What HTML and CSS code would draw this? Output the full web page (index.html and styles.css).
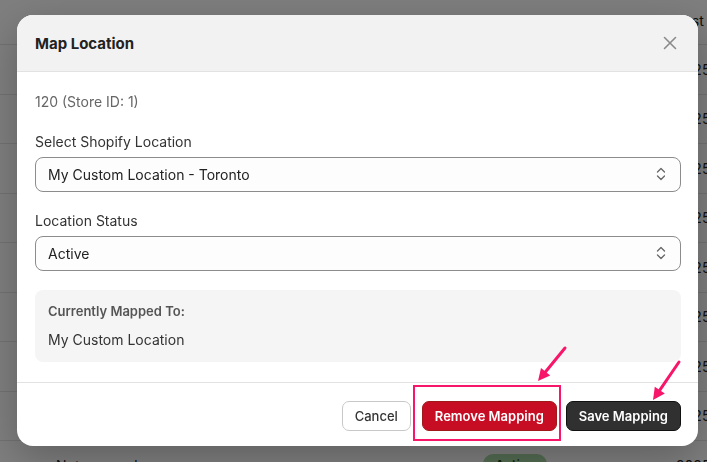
FILE: index.html
```html
<!DOCTYPE html>
<html lang="en">
<head>
    <meta charset="UTF-8">
    <meta name="viewport" content="width=device-width, initial-scale=1.0">
    <title>Store Locations</title>
    <link rel="stylesheet" href="styles.css">
</head>
<body>
    <div class="locations">
        <div class="row row-head">
            <span class="col-name"></span>
            <span class="col-status"></span>
            <span class="col-date">Last</span>
        </div>
        <div class="row"><span class="col-name"></span><span class="col-status"></span><span class="col-date">2025</span></div>
        <div class="row"><span class="col-name"></span><span class="col-status"></span><span class="col-date">2025</span></div>
        <div class="row"><span class="col-name"></span><span class="col-status"></span><span class="col-date">2025</span></div>
        <div class="row"><span class="col-name"></span><span class="col-status"></span><span class="col-date">2025</span></div>
        <div class="row"><span class="col-name"></span><span class="col-status"></span><span class="col-date">2025</span></div>
        <div class="row"><span class="col-name"></span><span class="col-status"></span><span class="col-date">2025</span></div>
        <div class="row"><span class="col-name"></span><span class="col-status"></span><span class="col-date">2025</span></div>
        <div class="row"><span class="col-name"></span><span class="col-status"></span><span class="col-date">2025</span></div>
        <div class="row"><span class="col-name">Not mapped</span><span class="col-status"><span class="badge">Active</span></span><span class="col-date">2025</span></div>
    </div>

    <div class="backdrop"></div>

    <div class="modal">
        <div class="modal-header">
            <h3 class="modal-title">Map Location</h3>
            <button class="modal-close" aria-label="Close">
                <svg width="14" height="14" viewBox="0 0 14 14"><path d="M1.5 1.5l11 11M12.5 1.5l-11 11" stroke="#8a8a8a" stroke-width="1.6" stroke-linecap="round"/></svg>
            </button>
        </div>
        <div class="modal-body">
            <p class="meta">120 (Store ID: 1)</p>

            <label class="field-label">Select Shopify Location</label>
            <div class="select-wrap">
                <select class="select">
                    <option>My Custom Location - Toronto</option>
                </select>
                <svg class="chevrons" width="10" height="14" viewBox="0 0 10 14"><path d="M1.5 5l3.5-3.5L8.5 5M1.5 9l3.5 3.5L8.5 9" fill="none" stroke="#666" stroke-width="1.3" stroke-linecap="round" stroke-linejoin="round"/></svg>
            </div>

            <label class="field-label">Location Status</label>
            <div class="select-wrap">
                <select class="select">
                    <option>Active</option>
                </select>
                <svg class="chevrons" width="10" height="14" viewBox="0 0 10 14"><path d="M1.5 5l3.5-3.5L8.5 5M1.5 9l3.5 3.5L8.5 9" fill="none" stroke="#666" stroke-width="1.3" stroke-linecap="round" stroke-linejoin="round"/></svg>
            </div>

            <div class="current">
                <div class="current-title">Currently Mapped To:</div>
                <div class="current-value">My Custom Location</div>
            </div>
        </div>
        <div class="modal-footer">
            <button class="btn btn-cancel">Cancel</button>
            <button class="btn btn-remove">Remove Mapping</button>
            <button class="btn btn-save">Save Mapping</button>
        </div>
    </div>

    <!-- callout marks drawn on top of the dialog -->
    <svg class="marks" width="707" height="462" viewBox="0 0 707 462">
        <rect x="414" y="386" width="146" height="54" fill="none" stroke="#f7166a" stroke-width="2"/>
        <line x1="565" y1="348" x2="545.6" y2="371.7" stroke="#f7166a" stroke-width="3" stroke-linecap="round"/>
        <polygon points="538,381 550.2,375.5 541,367.9" fill="#f7166a"/>
        <line x1="679" y1="362" x2="659.8" y2="390.1" stroke="#f7166a" stroke-width="3" stroke-linecap="round"/>
        <polygon points="653,400 664.8,393.5 654.8,386.7" fill="#f7166a"/>
    </svg>
</body>
</html>
```

FILE: styles.css
```css
body {
    margin: 0;
    background: #ffffff;
    font-family: 'Inter', 'Noto Sans', sans-serif;
    color: #222222;
    overflow: hidden;
    height: 462px;
}
/* Table behind the dialog */
.locations {
    font-size: 14px;
}
.row {
    display: grid;
    grid-template-columns: 427px 193px 1fr;
    align-items: center;
    height: 49.5px;
    box-sizing: border-box;
    border-bottom: 1px solid #e5e5e5;
    padding-left: 56px;
    white-space: nowrap;
}
.row-head {
    height: 45px;
    align-items: start;
    padding-top: 12px;
}
.badge {
    display: inline-block;
    background: #a9d9a4;
    color: #1c4a1c;
    border-radius: 10px;
    padding: 3px 12px;
    font-size: 13px;
    font-weight: 600;
}
.backdrop {
    position: fixed;
    inset: 0;
    background: rgba(0, 0, 0, 0.5);
}
/* Dialog */
.modal {
    position: absolute;
    left: 17px;
    top: 15px;
    width: 681px;
    height: 431px;
    background: #ffffff;
    border-radius: 16px;
    overflow: hidden;
    display: flex;
    flex-direction: column;
    box-shadow: 0 12px 40px rgba(0, 0, 0, 0.25);
}
.modal-header {
    height: 57px;
    box-sizing: border-box;
    background: #f2f2f2;
    border-bottom: 1px solid #e2e2e2;
    display: flex;
    align-items: center;
    justify-content: space-between;
    padding: 0 21px 0 18px;
}
.modal-title {
    margin: 0;
    font-size: 15px;
    font-weight: 700;
    color: #222222;
}
.modal-close {
    border: none;
    background: none;
    padding: 0;
    display: flex;
    cursor: pointer;
}
.modal-body {
    padding: 20px 17px 20px 18px;
    display: flex;
    flex-direction: column;
}
.meta {
    margin: 0 0 20px;
    font-size: 14px;
    line-height: 20px;
    color: #666666;
}
.field-label {
    font-size: 14px;
    line-height: 20px;
    color: #333333;
    margin-bottom: 5px;
}
.select-wrap {
    position: relative;
    margin-bottom: 19px;
}
.select {
    appearance: none;
    -webkit-appearance: none;
    width: 100%;
    height: 35px;
    box-sizing: border-box;
    border: 1px solid #8c8c8c;
    border-radius: 8px;
    background: #fdfdfd;
    padding: 0 12px;
    font-family: inherit;
    font-size: 14px;
    color: #222222;
}
.chevrons {
    position: absolute;
    right: 15px;
    top: 10px;
    pointer-events: none;
}
.current {
    background: #f5f5f5;
    border-radius: 8px;
    padding: 12px 13px 12px;
}
.current-title {
    font-size: 13px;
    line-height: 18px;
    font-weight: 600;
    color: #555555;
    margin-bottom: 10px;
}
.current-value {
    font-size: 14px;
    line-height: 20px;
    color: #333333;
}
.modal-footer {
    border-top: 1px solid #e2e2e2;
    display: flex;
    justify-content: flex-end;
    padding: 18px 17px 0 0;
}
.btn {
    height: 30px;
    box-sizing: border-box;
    border-radius: 7px;
    padding: 0 12px;
    font-family: inherit;
    font-size: 13px;
    cursor: pointer;
}
.btn-cancel {
    background: #ffffff;
    border: 1px solid #c8c8c8;
    color: #333333;
    font-weight: 500;
    margin-right: 11px;
}
.btn-remove {
    background: #c60d24;
    border: 1px solid #9e1a1a;
    color: #ffffff;
    font-weight: 600;
    margin-right: 9px;
}
.btn-save {
    background: #303030;
    border: 1px solid #111111;
    color: #ffffff;
    font-weight: 600;
}
.marks {
    position: absolute;
    left: 0;
    top: 0;
    pointer-events: none;
}
```
